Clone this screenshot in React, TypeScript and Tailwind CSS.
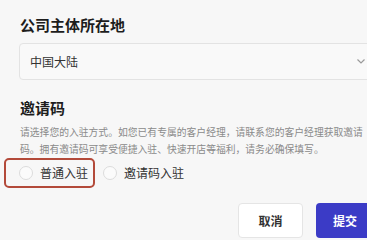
import React from "react";

export default function App() {
  return (
    <div className="w-[367px] h-[240px] overflow-hidden bg-[#f7f7f7] font-['Noto_Sans_CJK_SC','Noto_Sans',sans-serif]">
      <div className="pt-[15px] pl-[20px]">
        <h2 className="text-[15px] leading-[20px] font-bold text-[#1d1d1d]">公司主体所在地</h2>
        <div className="mt-[8px] -ml-px h-[37px] w-[356px] flex items-center justify-between pl-[10px] pr-[9px] border border-[#e3e3e3] rounded-[4px] bg-[#f9f9f9]">
          <span className="text-[12px] text-[#333]">中国大陆</span>
          <svg width="8" height="5" viewBox="0 0 8 5" fill="none">
            <path d="M0.5 0.5L4 4L7.5 0.5" stroke="#9a9a9a" strokeWidth="1.2" />
          </svg>
        </div>
        <h2 className="mt-[18px] text-[15px] leading-[20px] font-bold text-[#1d1d1d]">邀请码</h2>
        <p className="mt-[6px] w-[347px] text-[9.8px] leading-[17px] text-[#8a8a8a]">
          请选择您的入驻方式。如您已有专属的客户经理，请联系您的客户经理获取邀请码。拥有邀请码可享受便捷入驻、快速开店等福利，请务必确保填写。
        </p>
        <div className="flex items-center">
          <div className="-ml-[16px] h-[30px] flex items-center gap-[7px] border-2 border-[#b34a3a] rounded-[5px] pl-[13px] pr-[5px]">
            <span className="w-[14px] h-[14px] rounded-full border border-[#dcdcdc] bg-[#fbfbfb]" />
            <span className="text-[12px] text-[#333]">普通入驻</span>
          </div>
          <div className="ml-[8px] flex items-center gap-[7px]">
            <span className="w-[14px] h-[14px] rounded-full border border-[#dcdcdc] bg-[#fbfbfb]" />
            <span className="text-[12px] text-[#333]">邀请码入驻</span>
          </div>
        </div>
        <div className="mt-[15px] flex justify-end gap-[13px] -mr-[7px]">
          <button className="w-[65px] h-[35px] bg-white border border-[#e5e5e5] rounded-[4px] text-[12px] font-semibold text-[#333]">取消</button>
          <button className="w-[58px] h-[35px] bg-[#3b3bc6] rounded-[4px] text-[12px] font-semibold text-white">提交</button>
        </div>
      </div>
    </div>
  );
}
